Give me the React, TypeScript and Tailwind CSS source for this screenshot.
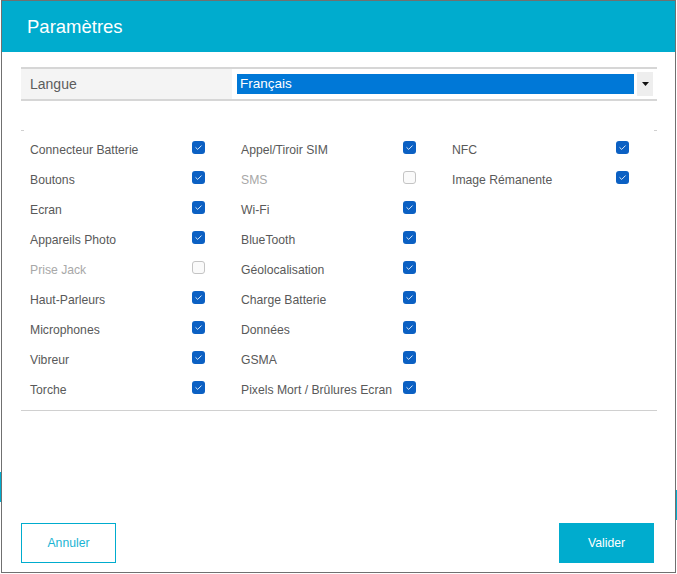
type Item = { label: string; checked: boolean };

const columns: Item[][] = [
  [
    { label: 'Connecteur Batterie', checked: true },
    { label: 'Boutons', checked: true },
    { label: 'Ecran', checked: true },
    { label: 'Appareils Photo', checked: true },
    { label: 'Prise Jack', checked: false },
    { label: 'Haut-Parleurs', checked: true },
    { label: 'Microphones', checked: true },
    { label: 'Vibreur', checked: true },
    { label: 'Torche', checked: true },
  ],
  [
    { label: 'Appel/Tiroir SIM', checked: true },
    { label: 'SMS', checked: false },
    { label: 'Wi-Fi', checked: true },
    { label: 'BlueTooth', checked: true },
    { label: 'Géolocalisation', checked: true },
    { label: 'Charge Batterie', checked: true },
    { label: 'Données', checked: true },
    { label: 'GSMA', checked: true },
    { label: 'Pixels Mort / Brûlures Ecran', checked: true },
  ],
  [
    { label: 'NFC', checked: true },
    { label: 'Image Rémanente', checked: true },
  ],
];

function Checkbox({ checked }: { checked: boolean }) {
  if (!checked) {
    return <span className="mb-[5px] block h-[13px] w-[13px] shrink-0 rounded-[3px] border border-[#c4c4c4] bg-[#fafafa]" />;
  }
  return (
    <span className="mb-[5px] flex h-[13px] w-[13px] shrink-0 items-center justify-center rounded-[3px] bg-[#0b60c3]">
      <svg width="13" height="13" viewBox="0 0 13 13" fill="none">
        <path d="M3.8 6.6 L5.7 8.4 L9.3 4.8" stroke="#dce9f7" strokeWidth="1" strokeLinecap="round" strokeLinejoin="round" />
      </svg>
    </span>
  );
}

function Row({ item, wide }: { item: Item; wide: boolean }) {
  return (
    <div className="flex h-[30px] items-center">
      <span
        className={`shrink-0 pl-[9px] text-[12.2px] whitespace-nowrap ${wide ? 'w-[173px]' : 'w-[171px]'} ${
          item.checked ? 'text-[#595959]' : 'text-[#a8a8a8]'
        }`}>
        {item.label}
      </span>
      <Checkbox checked={item.checked} />
    </div>
  );
}

export default function App() {
  return (
    <div
      className="relative h-[574px] w-[677px] overflow-hidden bg-white pl-[1px]"
      style={{ fontFamily: '"Liberation Sans", Arial, sans-serif' }}>
      {/* page behind the dialog */}
      <div className="absolute top-[472px] left-0 h-[30px] w-[1px] bg-[#00acce]" />
      <div className="absolute top-[490px] right-0 h-[30px] w-[1px] bg-[#00acce]" />

      <div className="flex h-[573px] w-[675px] flex-col border border-[#707070] bg-white">
        <div className="flex h-[51px] items-center bg-[#00acce] pl-[25px]">
          <span className="text-[18.5px] text-white">Paramètres</span>
        </div>

        <div className="flex flex-1 flex-col pr-[18px] pl-[19px]">
          <div className="mt-[15px] h-[2px] bg-[#d6d6d6]" />
          <div className="flex h-[30px]">
            <div className="flex w-[211px] items-center bg-[#f4f4f4] pl-[9px] text-[14px] text-[#5c5c5c]">Langue</div>
            <div className="flex flex-1 items-center pr-[4px] pl-[5px]">
              <div className="flex h-[24px] w-full items-center">
                <div className="flex h-[20px] flex-1 items-center bg-[#0078d7] pl-[3px] text-[13.5px] text-white">
                  Français
                </div>
                <div className="ml-[3px] flex h-full w-[16px] items-center justify-center bg-[#eeeeee]">
                  <svg width="7" height="4" viewBox="0 0 7 4">
                    <path d="M0 0 H7 L3.5 4 Z" fill="#111" />
                  </svg>
                </div>
              </div>
            </div>
          </div>
          <div className="h-[2px] bg-[#d6d6d6]" />

          <div className="mt-[29px] flex h-px justify-between">
            <span className="w-[3px] bg-[#d0d0d0]" />
            <span className="w-[3px] bg-[#d0d0d0]" />
          </div>

          <div className="grid grid-cols-[211px_211px_1fr] pt-[4px]">
            {columns.map((col, i) => (
              <div key={i} className="flex flex-col">
                {col.map(item => (
                  <Row key={item.label} item={item} wide={i === 2} />
                ))}
              </div>
            ))}
          </div>

          <div className="mt-[5px] h-px bg-[#d0d0d0]" />

          <div className="mt-auto mb-[9px] flex justify-between pr-[3px]">
            <button
              type="button"
              className="h-[40px] w-[95px] border border-[#00acce] bg-white text-[12.2px] text-[#19b3d3]">
              Annuler
            </button>
            <button type="button" className="h-[40px] w-[95px] bg-[#00acce] text-[12.2px] text-white">
              Valider
            </button>
          </div>
        </div>
      </div>
    </div>
  );
}
